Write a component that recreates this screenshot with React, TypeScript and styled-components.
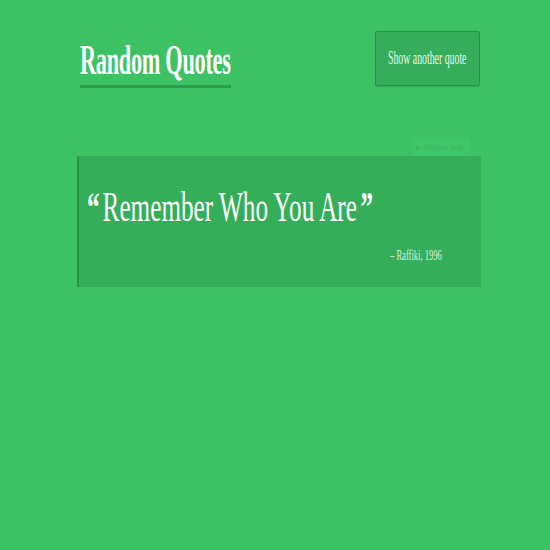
import React from "react";
import styled, { createGlobalStyle } from "styled-components";

const Global = createGlobalStyle`
  html, body { margin: 0; padding: 0; background: #3cc264; }
  body { font-family: "Liberation Serif", "Times New Roman", serif; width: 550px; height: 550px; overflow: hidden; }
`;

const Page = styled.div`
  width: 404px;
  margin-left: 77px;
  padding-top: 31px;
`;

const Header = styled.header`
  display: flex;
  justify-content: space-between;
  align-items: flex-start;
  padding-left: 3px;
  padding-right: 1px;
`;

const TitleWrap = styled.div`
  width: 151px;
  height: 57px;
  border-bottom: 3px solid #2e9a4f;
  padding-top: 7px;
  box-sizing: border-box;
`;

const Condensed = styled.span<{ $scale: number }>`
  display: inline-block;
  white-space: nowrap;
  transform: scaleX(${(p) => p.$scale});
  transform-origin: left center;
`;

const Title = styled.h1`
  margin: 0;
  font-size: 42px;
  line-height: 44px;
  font-weight: 700;
  color: #fff;
  letter-spacing: -0.5px;
`;

const Button = styled.button`
  width: 105px;
  height: 55px;
  box-sizing: border-box;
  background: #35ad5a;
  border: 1px solid #2c8e4a;
  border-radius: 2px;
  box-shadow: 0 1px 1px rgba(0, 0, 0, 0.12);
  color: #eef6ee;
  font-family: "Liberation Serif", serif;
  font-size: 18px;
  padding: 0 0 0 12px;
  text-align: left;
  cursor: pointer;
`;

const SnipRow = styled.div`
  display: flex;
  justify-content: flex-end;
  height: 18px;
  padding-top: 50px;
  padding-right: 11px;
`;

const Snip = styled.div`
  width: 58px;
  height: 17px;
  background: #3fc66a;
  display: flex;
  align-items: center;
  gap: 3px;
  padding-left: 4px;
  box-sizing: border-box;
  font-family: "Liberation Serif", serif;
  font-size: 9px;
  white-space: nowrap;
  color: #37b55e;
`;

const QuoteBox = styled.section`
  height: 131px;
  background: #35ae5a;
  border-left: 2px solid #2b8f48;
  border-radius: 1px;
  box-sizing: border-box;
  padding: 27px 38px 0 8px;
  display: flex;
  flex-direction: column;
`;

const QuoteText = styled.blockquote`
  margin: 0;
  font-size: 42px;
  line-height: 48px;
  color: #fff;
  height: 54px;
`;

const Mark = styled.span<{ $side: "open" | "close" }>`
  font-weight: 700;
  ${(p) => (p.$side === "open" ? "margin-right: 5px;" : "margin-left: 6px;")}
`;

const Author = styled.div`
  align-self: flex-end;
  width: 53px;
  font-size: 15px;
  color: #dfeedd;
  margin-top: 10px;
`;

export default function App() {
  return (
    <>
      <Global />
      <Page>
        <Header>
          <TitleWrap>
            <Title>
              <Condensed $scale={0.53}>Random Quotes</Condensed>
            </Title>
          </TitleWrap>
          <Button>
            <Condensed $scale={0.545}>Show another quote</Condensed>
          </Button>
        </Header>
        <SnipRow>
          <Snip>
            <span>▸</span>
            <Condensed $scale={0.8}>Window Snip</Condensed>
          </Snip>
        </SnipRow>
        <QuoteBox>
          <QuoteText>
            <Condensed $scale={0.6}>
              <Mark $side="open">“</Mark>Remember Who You Are<Mark $side="close">”</Mark>
            </Condensed>
          </QuoteText>
          <Author>
            <Condensed $scale={0.57}>– Raffiki, 1996</Condensed>
          </Author>
        </QuoteBox>
      </Page>
    </>
  );
}
